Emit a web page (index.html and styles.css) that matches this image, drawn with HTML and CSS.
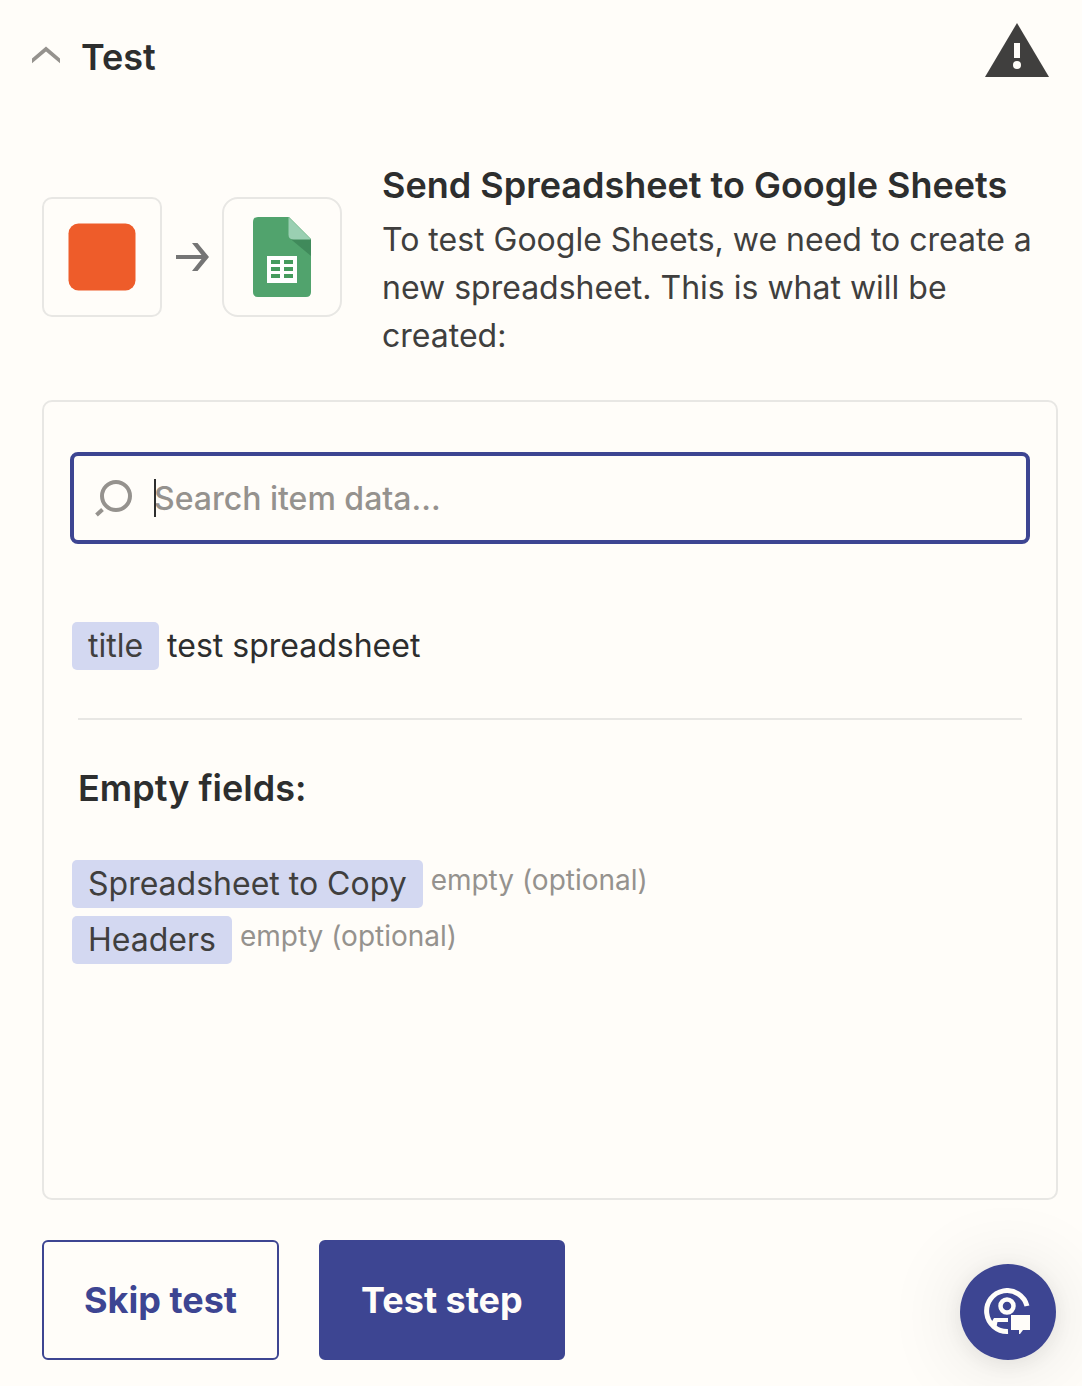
FILE: index.html
```html
<!DOCTYPE html>
<html lang="en">
<head>
    <meta charset="UTF-8">
    <meta name="viewport" content="width=device-width, initial-scale=1">
    <title>Test</title>
    <link rel="stylesheet" href="styles.css">
</head>
<body>
    <header class="section-header">
        <button type="button" class="toggle" aria-expanded="true">
            <svg class="chevron" width="28" height="18" viewBox="0 0 28 18" aria-hidden="true">
                <path d="M0 12.400 14 .6l14 11.800v4.800L14 5.600 0 17.200z" fill="#95928e"/>
            </svg>
            <span>Test</span>
        </button>
        <svg class="warning" width="64" height="54" viewBox="0 0 64 54" role="img" aria-label="Warning">
            <path d="M32 0 64 54H0z" fill="#403f3e"/>
            <path d="M29 20h6v15h-6z" fill="#fffdf9"/>
            <circle cx="32" cy="42" r="4" fill="#fffdf9"/>
        </svg>
    </header>

    <main class="content">
        <section class="summary">
            <div class="apps">
                <div class="app">
                    <svg width="68" height="68" viewBox="0 0 68 68" aria-hidden="true">
                        <rect x=".5" y=".5" width="67" height="67" rx="10" fill="#ee5c2a"/>
                    </svg>
                </div>
                <svg class="arrow" width="34" height="30" viewBox="0 0 34 30" aria-hidden="true">
                    <path d="M1 13h25.500L17 1h5.500L34 15 22.500 29H17l9.500-12H1z" fill="#757575"/>
                </svg>
                <div class="app app-sheets">
                    <svg width="58" height="80" viewBox="0 0 58 80" aria-hidden="true">
                        <path d="M5 0h31l22 22v53q0 5-5 5H5q-5 0-5-5V5q0-5 5-5z" fill="#51a36d"/>
                        <path d="M37 21.500 58 39V22z" fill="#408a5b"/>
                        <path d="M35.500 0 58 22.500H40.500q-5 0-5-5z" fill="#9acfb2"/>
                        <path d="M14 39h30v27H14z" fill="#fff"/>
                        <path d="M18 43h9v4h-9zM31 43h9v4h-9zM18 50h9v4h-9zM31 50h9v4h-9zM18 57h9v4h-9zM31 57h9v4h-9z" fill="#459b5d"/>
                    </svg>
                </div>
            </div>
            <div class="summary-text">
                <h2>Send Spreadsheet to Google Sheets</h2>
                <p>To test Google Sheets, we need to create a new spreadsheet. This is what will be created:</p>
            </div>
        </section>

        <section class="panel">
            <div class="search">
                <svg width="40" height="38" viewBox="0 0 40 38" fill="none" stroke="#95928e" stroke-width="4" aria-hidden="true">
                    <circle cx="22" cy="17" r="14"/>
                    <path d="M8.500 30.500 2.500 36"/>
                </svg>
                <div class="search-field">
                    <span class="caret"></span>
                    <input type="text" placeholder="Search item data..." aria-label="Search item data">
                </div>
            </div>

            <div class="field field-title">
                <span class="tag">title</span>
                <span>test spreadsheet</span>
            </div>

            <hr>

            <h2>Empty fields:</h2>
            <div class="empty-fields">
                <div class="field">
                    <span class="tag">Spreadsheet to Copy</span>
                    <span class="empty">empty (optional)</span>
                </div>
                <div class="field">
                    <span class="tag">Headers</span>
                    <span class="empty">empty (optional)</span>
                </div>
            </div>
        </section>

        <div class="actions">
            <button type="button" class="btn">Skip test</button>
            <button type="button" class="btn btn-primary">Test step</button>
        </div>
    </main>

    <button type="button" class="support" aria-label="Support">
        <svg width="48" height="48" viewBox="0 0 48 48" aria-hidden="true">
            <path d="M43 18A20.500 20.500 0 1 0 24 43.500" fill="none" stroke="#fffdf9" stroke-width="5"/>
            <circle cx="23" cy="18" r="6.500" fill="none" stroke="#fffdf9" stroke-width="4.500"/>
            <path d="M24 30v4H13.500l-1 4.500L7 35l3-5z" fill="#fffdf9"/>
            <path d="M27 27h19v15h-7l-3 4h-1v-4h-8z" fill="#fffdf9"/>
        </svg>
    </button>
</body>
</html>
```
FILE: styles.css
```css
* {
    box-sizing: border-box;
}

body {
    margin: 0;
    background-color: #fffdf9;
    color: #2d2e2e;
    font-family: Inter, "Liberation Sans", sans-serif;
    font-size: 32px;
    line-height: 48px;
}

h2,
p {
    margin: 0;
}

h2 {
    font-size: 36px;
    font-weight: 600;
    line-height: 48px;
}

button,
input {
    font-family: inherit;
}

button {
    cursor: pointer;
}

.section-header {
    display: flex;
    justify-content: space-between;
    align-items: flex-start;
    padding: 23px 33px 0 32px;
}

.toggle {
    display: flex;
    align-items: center;
    gap: 21px;
    padding: 10px 0 0;
    border: none;
    background: none;
    color: #2d2e2e;
    font-size: 36px;
    font-weight: 600;
    line-height: 48px;
}

.chevron {
    margin-bottom: 4px;
}

.content {
    padding: 80px 24px 26px 42px;
}

.summary {
    display: flex;
    align-items: flex-start;
    gap: 40px;
    margin-bottom: 40px;
}

.apps {
    display: flex;
    flex-shrink: 0;
    align-items: center;
    margin-top: 36px;
}

.app {
    display: flex;
    justify-content: center;
    align-items: center;
    width: 120px;
    height: 120px;
    border: 2px solid #e8e7e4;
    border-radius: 10px;
}

.app-sheets {
    border-radius: 16px;
}

.arrow {
    margin: 0 13px;
}

.summary-text {
    flex: 1;
}

.summary-text h2 {
    margin-bottom: 7px;
}

.summary-text p {
    color: #403f3e;
}

.panel {
    min-height: 800px;
    padding: 50px 26px;
    border: 2px solid #e8e7e4;
    border-radius: 10px;
}

.search {
    display: flex;
    align-items: center;
    gap: 20px;
    height: 92px;
    padding: 0 20px;
    border: 4px solid #3d4592;
    border-radius: 8px;
}

.search-field {
    position: relative;
    flex: 1;
}

.search-field input {
    display: block;
    width: 100%;
    height: 48px;
    padding: 0;
    border: none;
    outline: none;
    background: none;
    color: #2d2e2e;
    font-size: 32px;
    font-weight: 500;
}

.search-field input::placeholder {
    color: #95928e;
    opacity: 1;
}

.caret {
    position: absolute;
    top: 5px;
    left: 0;
    width: 2px;
    height: 38px;
    background-color: #2d2e2e;
}

.field {
    display: flex;
    gap: 8px;
    padding-left: 2px;
}

.field-title {
    margin-top: 78px;
}

.tag {
    padding: 0 16px;
    border-radius: 5px;
    background-color: #d3d8f1;
    color: #403f3e;
}

.empty {
    color: #95928e;
    font-size: 28px;
    line-height: 40px;
}

.panel hr {
    margin: 48px 8px 0;
    border: none;
    border-top: 2px solid #e8e7e4;
}

.panel h2 {
    margin: 44px 8px 48px;
}

.empty-fields {
    display: flex;
    flex-direction: column;
    gap: 8px;
}

.actions {
    display: flex;
    gap: 40px;
    margin-top: 40px;
}

.btn {
    height: 120px;
    padding: 0 40px;
    border: 2px solid #3d4592;
    border-radius: 6px;
    background-color: #fffdf9;
    color: #3d4592;
    font-size: 36px;
    font-weight: 700;
}

.btn-primary {
    background-color: #3d4592;
    color: #fffdf9;
}

.support {
    position: fixed;
    right: 26px;
    bottom: 26px;
    display: flex;
    justify-content: center;
    align-items: center;
    width: 96px;
    height: 96px;
    padding: 0;
    border: none;
    border-radius: 50%;
    background-color: #3d4592;
    box-shadow: 0 4px 80px rgba(0, 0, 0, 0.12), 0 4px 24px rgba(0, 0, 0, 0.08);
}
```
